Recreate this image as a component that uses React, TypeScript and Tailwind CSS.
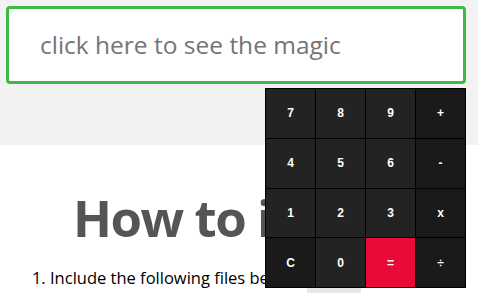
import React from "react";

const keys: { label: string; tone: "num" | "op" | "eq" }[] = [
  { label: "7", tone: "num" },
  { label: "8", tone: "num" },
  { label: "9", tone: "num" },
  { label: "+", tone: "op" },
  { label: "4", tone: "num" },
  { label: "5", tone: "num" },
  { label: "6", tone: "num" },
  { label: "-", tone: "op" },
  { label: "1", tone: "num" },
  { label: "2", tone: "num" },
  { label: "3", tone: "num" },
  { label: "x", tone: "op" },
  { label: "C", tone: "op" },
  { label: "0", tone: "num" },
  { label: "=", tone: "eq" },
  { label: "÷", tone: "op" },
];

const toneClass = {
  num: "bg-[#232323]",
  op: "bg-[#1a1a1a]",
  eq: "bg-[#eb0a37]",
};

export default function App() {
  return (
    <div className="min-h-screen bg-white" style={{ fontFamily: '"Open Sans", "Noto Sans", sans-serif' }}>
      {/* Header band with the input */}
      <section className="relative bg-[#f2f2f2] pt-[6px] pl-[6px] pr-[12px] h-[145px]">
        <div className="h-[78px] rounded-[4px] border-[3px] border-[#3cba45] bg-white flex items-center pl-[31px]">
          <span className="text-[24.5px] text-[#757575] leading-none mt-[1px]">click here to see the magic</span>
        </div>

        {/* Calculator dropdown */}
        <div className="absolute left-[265px] top-[88px] z-10 grid w-[201px] grid-cols-4 gap-px border border-black bg-black">
          {keys.map((k) => (
            <button
              key={k.label}
              className={`h-[48.75px] flex items-center justify-center text-[12px] font-bold text-white ${toneClass[k.tone]}`}
              style={{ fontFamily: '"Liberation Sans", Arial, sans-serif' }}
            >
              {k.label}
            </button>
          ))}
        </div>
      </section>

      {/* Docs */}
      <section className="pt-[47px]">
        <h1 className="text-center text-[51px] font-bold leading-none tracking-[-1.5px] text-[#555555]">How to install</h1>
        <ol className="mt-[23px] list-decimal pl-[50px] text-[16.5px] text-black">
          <li>Include the following files before the closing body tag</li>
        </ol>
        <div className="ml-[307px] -mt-[4px] h-[6px] w-[54px] bg-[#e6e6e6]" />
      </section>
    </div>
  );
}
